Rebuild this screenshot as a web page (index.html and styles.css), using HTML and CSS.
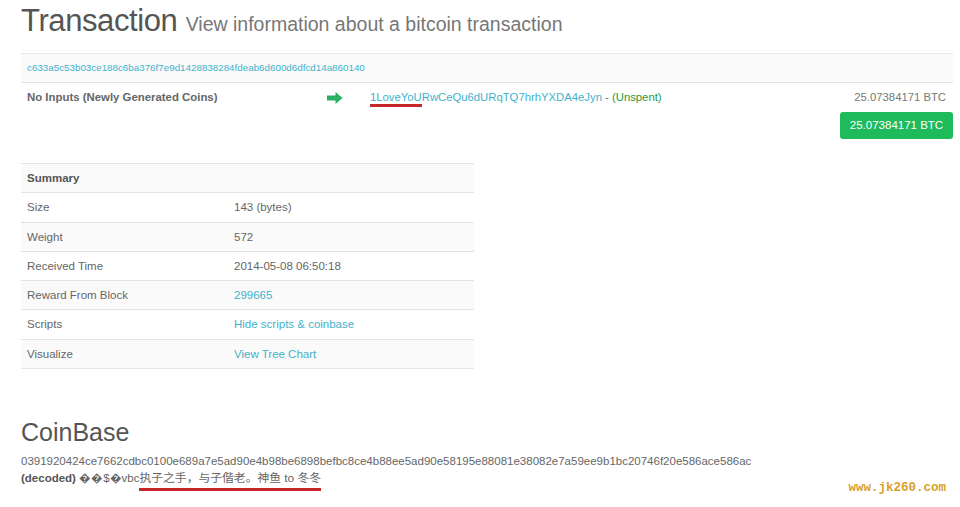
FILE: index.html
```html
<!DOCTYPE html>
<html>
    <head>
        <meta charset="utf-8" />
        <title>Transaction</title>
        <link rel="stylesheet" href="styles.css">
    </head>
    <body>
        <div class="page">
            <h1 class="title">Transaction <small>View information about a bitcoin transaction</small></h1>

            <div class="tx">
                <div class="tx-hash">
                    <a href="#">c633a5c53b03ce188c6ba376f7e9d1428838284fdeab6d600d6dfcd14a860140</a>
                </div>
                <div class="tx-io">
                    <div class="tx-in">No Inputs (Newly Generated Coins)</div>
                    <div class="tx-arrow">
                        <svg width="16" height="12" viewBox="0 0 16 12">
                            <path d="M0 3.6 H8.5 V0 L15.5 6 L8.5 12 V8.4 H0 Z" fill="#2bb063" />
                        </svg>
                    </div>
                    <div class="tx-out">
                        <span><a href="#"><span class="mark">1LoveYoU</span>RwCeQu6dURqTQ7hrhYXDA4eJyn</a> - <span class="unspent">(Unspent)</span></span>
                        <span class="amount">25.07384171 BTC</span>
                    </div>
                </div>
                <div class="tx-total">
                    <span class="btn-total">25.07384171 BTC</span>
                </div>
            </div>

            <table class="summary">
                <tr><th colspan="2">Summary</th></tr>
                <tr><td>Size</td><td>143 (bytes)</td></tr>
                <tr><td>Weight</td><td>572</td></tr>
                <tr><td>Received Time</td><td>2014-05-08 06:50:18</td></tr>
                <tr><td>Reward From Block</td><td><a href="#">299665</a></td></tr>
                <tr><td>Scripts</td><td><a href="#">Hide scripts &amp; coinbase</a></td></tr>
                <tr><td>Visualize</td><td><a href="#">View Tree Chart</a></td></tr>
            </table>

            <h2 class="coinbase">CoinBase</h2>
            <div class="hex">0391920424ce7662cdbc0100e689a7e5ad90e4b98be6898befbc8ce4b88ee5ad90e58195e88081e38082e7a59ee9b1bc20746f20e586ace586ac</div>
            <div class="decoded"><b>(decoded)</b> ��$�vbc<span class="mark mark-cn">执子之手，与子偕老。神鱼 to 冬冬</span></div>
        </div>
        <div class="watermark">www.jk260.com</div>
    </body>
</html>
```

FILE: styles.css
```css
html, body {
    margin: 0;
    padding: 0;
    background: #fff;
}
body {
    font-family: "Liberation Sans", Arial, "Noto Sans CJK SC", sans-serif;
    color: #666;
    font-size: 11px;
    position: relative;
    height: 507px;
    overflow: hidden;
}
a {
    color: #3fb2cc;
    text-decoration: none;
}
.page {
    padding: 4px 7px 0 21px;
}
.title {
    margin: 0 0 12px 0;
    font-size: 31px;
    line-height: 34px;
    font-weight: normal;
    color: #555;
    letter-spacing: -0.4px;
}
.title small {
    font-size: 19.5px;
    color: #777;
    letter-spacing: 0;
}
.tx-hash {
    border-top: 1px solid #e8e8e8;
    border-bottom: 1px solid #e3e3e3;
    background: #fafafa;
    padding: 0 6px;
    line-height: 28px;
    font-size: 9.8px;
}
.tx-io {
    display: flex;
    align-items: center;
    padding: 7px 7px 0 6px;
    line-height: 15px;
}
.tx-in {
    width: 300px;
    font-weight: bold;
    font-size: 11.4px;
    color: #666;
}
.tx-arrow {
    width: 43px;
    display: flex;
    align-items: center;
}
.tx-out {
    flex: 1;
    display: flex;
    justify-content: space-between;
    font-size: 11.3px;
}
.unspent {
    color: #2a9a3e;
}
.amount {
    color: #777;
}
.mark {
    border-bottom: 3px solid #c4262a;
    padding-bottom: 1px;
}
.tx-total {
    display: flex;
    justify-content: flex-end;
    margin-top: 7px;
}
.btn-total {
    background: #1fba5b;
    color: #fff;
    border-radius: 3px;
    width: 113px;
    height: 27px;
    line-height: 27px;
    text-align: center;
    font-size: 11.5px;
}
.summary {
    margin-top: 24px;
    width: 453px;
    border-collapse: collapse;
    border-bottom: 1px solid #e6e6e6;
    font-size: 11.5px;
}
.summary th, .summary td {
    text-align: left;
    border-top: 1px solid #e3e3e3;
    padding: 0 6px;
    line-height: 28.3px;
}
.summary th {
    color: #555;
}
.summary td:first-child {
    width: 195px;
}
.summary tr:nth-child(odd) {
    background: #fafafa;
}
.coinbase {
    margin: 48px 0 6px 0;
    font-size: 25px;
    line-height: 30px;
    font-weight: normal;
    color: #555;
}
.hex, .decoded {
    font-size: 11.5px;
    line-height: 17px;
    color: #666;
}
.decoded b {
    color: #555;
}
.mark-cn {
    font-size: 11.8px;
    padding-bottom: 3px;
}
.watermark {
    position: absolute;
    right: 14px;
    top: 481px;
    font-family: "Liberation Mono", monospace;
    font-weight: bold;
    font-size: 12.5px;
    color: #d9a12a;
}
```
